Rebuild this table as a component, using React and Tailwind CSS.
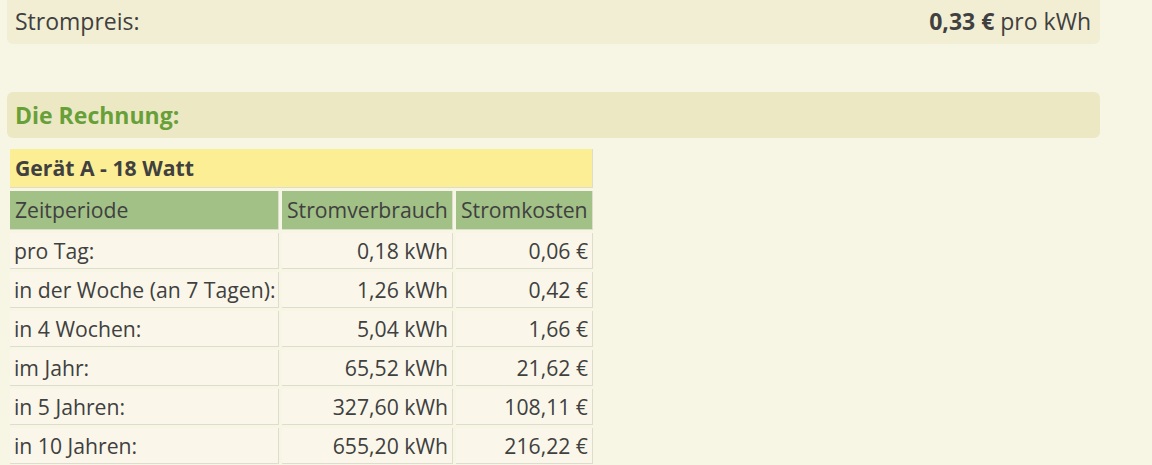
export default function App() {
  const rows = [
    ["pro Tag:", "0,18 kWh", "0,06 €"],
    ["in der Woche (an 7 Tagen):", "1,26 kWh", "0,42 €"],
    ["in 4 Wochen:", "5,04 kWh", "1,66 €"],
    ["im Jahr:", "65,52 kWh", "21,62 €"],
    ["in 5 Jahren:", "327,60 kWh", "108,11 €"],
    ["in 10 Jahren:", "655,20 kWh", "216,22 €"],
  ];
  return (
    <div className="min-h-[465px] w-[1152px] bg-[#f7f5e4] text-[#404040] font-['Open_Sans',sans-serif] pl-[7px]">
      <div className="w-[1093px] h-[44px] bg-[#f2eed3] rounded-b-[6px] flex items-center justify-between pl-[8px] pr-[9px] pb-[2px] text-[23px]">
        <span>Strompreis:</span>
        <span>
          <b className="font-bold">0,33 €</b> pro kWh
        </span>
      </div>
      <div className="mt-[48px] w-[1093px] h-[46px] bg-[#ede8c4] rounded-[6px] flex items-center pl-[8px] pt-[1px] text-[23px] font-bold text-[#67a038]">
        Die Rechnung:
      </div>
      <div className="mt-[8px] p-[3px] grid grid-cols-[269px_171px_137px] gap-[3px] w-fit text-[21.2px]">
        <div className="col-span-3 h-[39px] bg-[#fbee94] border-r border-b border-[#dedbcf] flex items-center pl-[5px] font-bold">
          Gerät A - 18 Watt
        </div>
        <div className="h-[39px] bg-[#a2c186] border-r border-b border-[#dedbcf] flex items-center pl-[5px]">Zeitperiode</div>
        <div className="h-[39px] bg-[#a2c186] border-r border-b border-[#dedbcf] flex items-center pl-[5px]">Stromverbrauch</div>
        <div className="h-[39px] bg-[#a2c186] border-r border-b border-[#dedbcf] flex items-center pl-[5px]">Stromkosten</div>
        {rows.map((r) => (
          <>
            <div key={r[0] + "a"} className="h-[36px] bg-[#faf7ea] border-r border-b border-[#dedbcf] flex items-center pl-[4px] whitespace-nowrap">{r[0]}</div>
            <div key={r[0] + "b"} className="h-[36px] bg-[#faf7ea] border-r border-b border-[#dedbcf] flex items-center justify-end pr-[4px]">{r[1]}</div>
            <div key={r[0] + "c"} className="h-[36px] bg-[#faf7ea] border-r border-b border-[#dedbcf] flex items-center justify-end pr-[4px]">{r[2]}</div>
          </>
        ))}
      </div>
    </div>
  );
}
